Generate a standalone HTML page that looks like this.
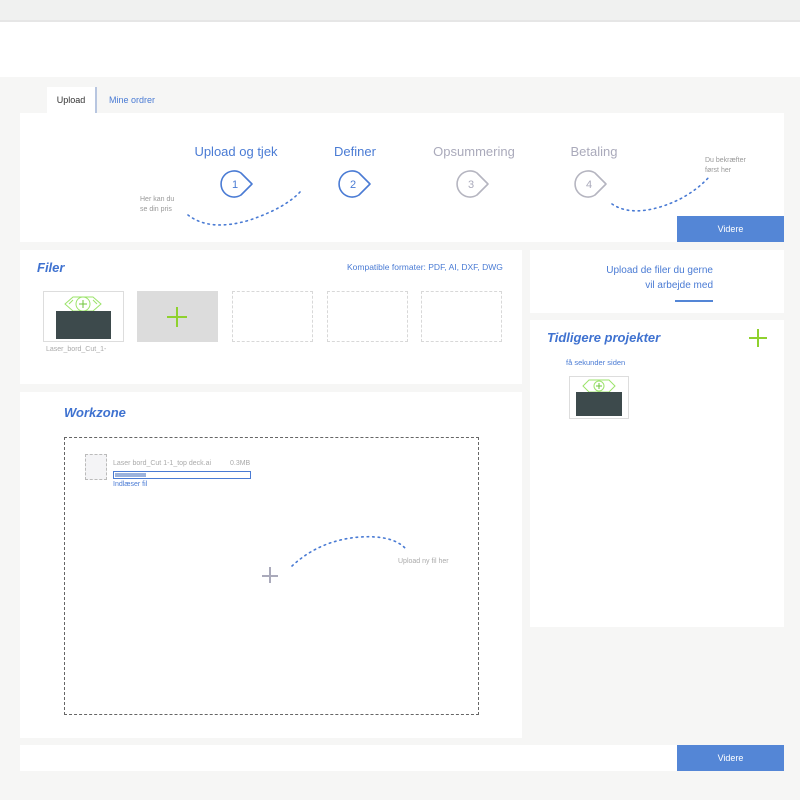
<!DOCTYPE html>
<html><head><meta charset="utf-8"><style>
*{margin:0;padding:0;box-sizing:border-box}
body{width:800px;height:800px;background:#f6f6f5;font-family:"Liberation Sans",sans-serif;position:relative;overflow:hidden}
.a{position:absolute}
.w{background:#fff}
.btn{background:#5486d6;color:#fff;font-size:9px;text-align:center}
.blue{color:#4a7bd4}
.grey{color:#aab}
.step{font-size:13px;text-align:center;width:120px}
.dash{border:1.5px dashed #d8d8d8}
h2{font-style:italic;font-weight:bold;color:#3f72d0;font-size:13px}
</style></head><body>
<div class="a" style="left:0;top:0;width:800px;height:20px;background:#f0f1f0"></div>
<div class="a" style="left:0;top:20px;width:800px;height:2px;background:#e6e6e6"></div>
<div class="a w" style="left:0;top:22px;width:800px;height:55px"></div>

<div class="a w" style="left:47px;top:87px;width:48px;height:27px;font-size:9px;color:#333;text-align:center;line-height:26px">Upload</div>
<div class="a" style="left:95px;top:87px;width:2px;height:26px;background:#b8c6e0"></div>
<div class="a blue" style="left:109px;top:95px;font-size:9px">Mine ordrer</div>

<div class="a w" style="left:20px;top:113px;width:764px;height:129px"></div>
<div class="a step blue" style="left:176px;top:144px">Upload og tjek</div>
<div class="a step blue" style="left:295px;top:144px">Definer</div>
<div class="a step grey" style="left:414px;top:144px">Opsummering</div>
<div class="a step grey" style="left:534px;top:144px">Betaling</div>
<svg class="a" style="left:0;top:0" width="800" height="250">
<g fill="none" stroke-width="1.6">
<path d="M241 173 A13 13 0 1 0 241 195 L252 184 Z" stroke="#4a7bd4" stroke-linejoin="round"/>
<path d="M359 173 A13 13 0 1 0 359 195 L370 184 Z" stroke="#4a7bd4" stroke-linejoin="round"/>
<path d="M477 173 A13 13 0 1 0 477 195 L488 184 Z" stroke="#b5b5c0" stroke-linejoin="round"/>
<path d="M595 173 A13 13 0 1 0 595 195 L606 184 Z" stroke="#b5b5c0" stroke-linejoin="round"/>
<path d="M188 215 Q210 232 250 220 Q285 208 300 192" stroke="#4a7bd4" stroke-dasharray="1.5 4" stroke-linecap="round"/>
<path d="M612 204 Q630 216 660 207 Q690 198 710 176" stroke="#4a7bd4" stroke-dasharray="1.5 4" stroke-linecap="round"/>
</g>
<g font-family="Liberation Sans" font-size="11" text-anchor="middle">
<text x="235" y="188" fill="#4a7bd4">1</text><text x="353" y="188" fill="#4a7bd4">2</text>
<text x="471" y="188" fill="#aab">3</text><text x="589" y="188" fill="#aab">4</text>
</g>
</svg>
<div class="a" style="left:140px;top:195px;font-size:7px;color:#999;line-height:10px">Her kan du<br>se din pris</div>
<div class="a" style="left:705px;top:156px;font-size:7px;color:#999;line-height:10px">Du bekræfter<br>først her</div>
<div class="a btn" style="left:677px;top:216px;width:107px;height:26px;line-height:26px">Videre</div>

<!-- Filer -->
<div class="a w" style="left:20px;top:250px;width:502px;height:134px"></div>
<h2 class="a" style="left:37px;top:260px">Filer</h2>
<div class="a blue" style="left:347px;top:262px;font-size:8.5px">Kompatible formater: PDF, AI, DXF, DWG</div>
<div class="a" style="left:43px;top:291px;width:81px;height:51px;border:1px solid #ddd;background:#fff"></div>
<svg class="a" style="left:43px;top:291px" width="81" height="51"><path d="M22 13 L30 6 L50 6 L58 13 L50 20 L30 20Z M26 13 L30 9 M54 13 L50 9" fill="none" stroke="#9be36a" stroke-width="1"/><circle cx="40" cy="13" r="7" fill="none" stroke="#9be36a"/><path d="M40 9v8M36 13h8" stroke="#6cc43a"/><rect x="13" y="20" width="55" height="28" fill="#3d4a4c"/></svg>
<div class="a" style="left:46px;top:346px;font-size:7px;color:#aaa">Laser_bord_Cut_1-</div>
<div class="a" style="left:137px;top:291px;width:81px;height:51px;background:#dcdcdc"></div>
<div class="a" style="left:167px;top:316px;width:20px;height:2px;background:#8fd12e"></div>
<div class="a" style="left:176px;top:307px;width:2px;height:20px;background:#8fd12e"></div>
<div class="a dash" style="left:232px;top:291px;width:81px;height:51px"></div>
<div class="a dash" style="left:327px;top:291px;width:81px;height:51px"></div>
<div class="a dash" style="left:421px;top:291px;width:81px;height:51px"></div>

<!-- Right -->
<div class="a w" style="left:530px;top:250px;width:254px;height:63px"></div>
<div class="a blue" style="left:540px;top:263px;width:173px;font-size:10px;text-align:right;line-height:15px">Upload de filer du gerne<br>vil arbejde med</div>
<div class="a" style="left:675px;top:300px;width:38px;height:1.5px;background:#5486d6"></div>
<div class="a w" style="left:530px;top:320px;width:254px;height:307px"></div>
<h2 class="a" style="left:547px;top:330px">Tidligere projekter</h2>
<div class="a" style="left:749px;top:337px;width:18px;height:2px;background:#8fd12e"></div>
<div class="a" style="left:757px;top:329px;width:2px;height:18px;background:#8fd12e"></div>
<div class="a blue" style="left:566px;top:358px;font-size:7.5px">få sekunder siden</div>
<div class="a" style="left:569px;top:376px;width:60px;height:43px;border:1px solid #ddd;background:#fff"></div>
<svg class="a" style="left:569px;top:376px" width="60" height="43"><path d="M14 10 L20 4 L40 4 L46 10 L40 16 L20 16Z" fill="none" stroke="#9be36a"/><circle cx="30" cy="10" r="5" fill="none" stroke="#9be36a"/><path d="M30 7v6M27 10h6" stroke="#6cc43a"/><rect x="7" y="16" width="46" height="24" fill="#3d4a4c"/></svg>

<!-- Workzone -->
<div class="a w" style="left:20px;top:392px;width:502px;height:346px"></div>
<h2 class="a" style="left:64px;top:405px">Workzone</h2>
<div class="a" style="left:64px;top:437px;width:415px;height:278px;border:1.5px dashed #666"></div>
<div class="a" style="left:85px;top:454px;width:22px;height:26px;border:1px dashed #bbb;background:#f4f4f6"></div>
<div class="a" style="left:113px;top:460px;font-size:7px;color:#aaa">Laser bord_Cut 1-1_top deck.ai</div>
<div class="a" style="left:230px;top:460px;font-size:7px;color:#aaa">0.3MB</div>
<div class="a" style="left:113px;top:471px;width:138px;height:8px;border:1.5px solid #4a7bd4"></div>
<div class="a" style="left:115px;top:473px;width:31px;height:4px;background:#9bb2dc"></div>
<div class="a blue" style="left:113px;top:481px;font-size:7px">Indlæser fil</div>
<div class="a" style="left:262px;top:575px;width:16px;height:1.5px;background:#aab"></div>
<div class="a" style="left:269px;top:567px;width:1.5px;height:16px;background:#aab"></div>
<svg class="a" style="left:280px;top:530px" width="140" height="40"><path d="M12 36 Q40 10 80 7 Q112 5 125 18" fill="none" stroke="#4a7bd4" stroke-width="1.6" stroke-dasharray="1.5 4" stroke-linecap="round"/></svg>
<div class="a" style="left:398px;top:558px;font-size:7px;color:#aaa">Upload ny fil her</div>

<div class="a w" style="left:20px;top:745px;width:764px;height:26px"></div>
<div class="a btn" style="left:677px;top:745px;width:107px;height:26px;line-height:26px">Videre</div>
</body></html>
